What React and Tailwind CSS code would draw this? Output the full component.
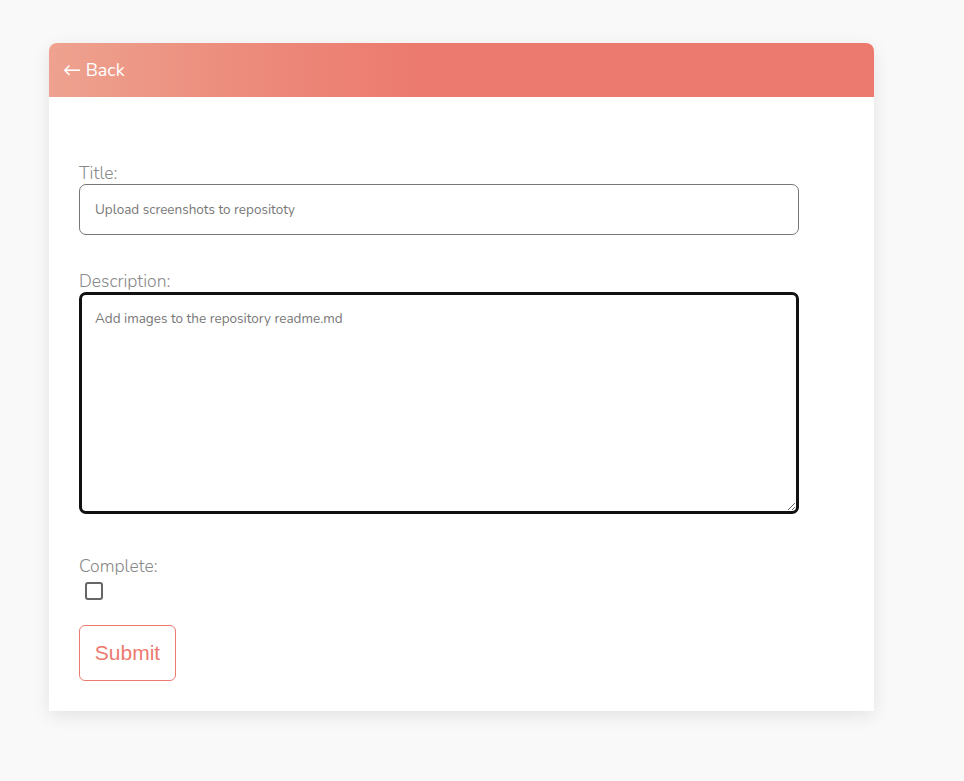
import React from "react";

export default function App() {
  const font = { fontFamily: "Nunito, Lato, 'Open Sans', sans-serif" };
  return (
    <div className="min-h-[781px] w-full bg-[#f9f9f9] pt-[43px] pl-[49px]" style={font}>
      <div className="w-[825px] rounded-t-[8px] bg-white shadow-[0_5px_18px_rgba(0,0,0,0.09)]">
        <div className="flex h-[54px] items-center rounded-t-[8px] bg-[linear-gradient(to_right,#eea28f_0%,#ec8a7b_25%,#ec7a6e_45%,#ec7a6e_100%)] pl-[14px]">
          <span className="text-[18px] leading-none text-white">← Back</span>
        </div>
        <div className="px-[30px] pt-[66px] pb-[30px]">
          <label className="block text-[17.5px] font-light leading-[20px] text-[#888]">Title:</label>
          <input
            defaultValue="Upload screenshots to repositoty"
            className="mt-[1px] block h-[51px] w-[720px] rounded-[7px] border border-[#777] px-[15px] text-[13.5px] text-[#777] outline-none"
            style={font}
          />
          <label className="mt-[36px] block text-[17.5px] font-light leading-[20px] text-[#888]">Description:</label>
          <textarea
            defaultValue="Add images to the repository readme.md"
            className="mt-[1px] block h-[222px] w-[720px] rounded-[7px] border-[3px] border-[#111] px-[13px] pt-[14px] text-[13.5px] text-[#777] outline-none"
            style={font}
          />
          <label className="mt-[42px] block text-[17.5px] font-light leading-[20px] text-[#888]">Complete:</label>
          <input
            type="checkbox"
            className="mt-[6px] ml-[6px] block h-[18px] w-[18px] appearance-none rounded-[3px] border-2 border-[#666] bg-white"
          />
          <button
            className="mt-[25px] block h-[56px] w-[97px] rounded-[6px] border border-[#ec7a6e] bg-white text-[21px] text-[#ec7a6e]"
            style={{ fontFamily: "'Liberation Sans', Arial, sans-serif" }}
          >
            Submit
          </button>
        </div>
      </div>
    </div>
  );
}
